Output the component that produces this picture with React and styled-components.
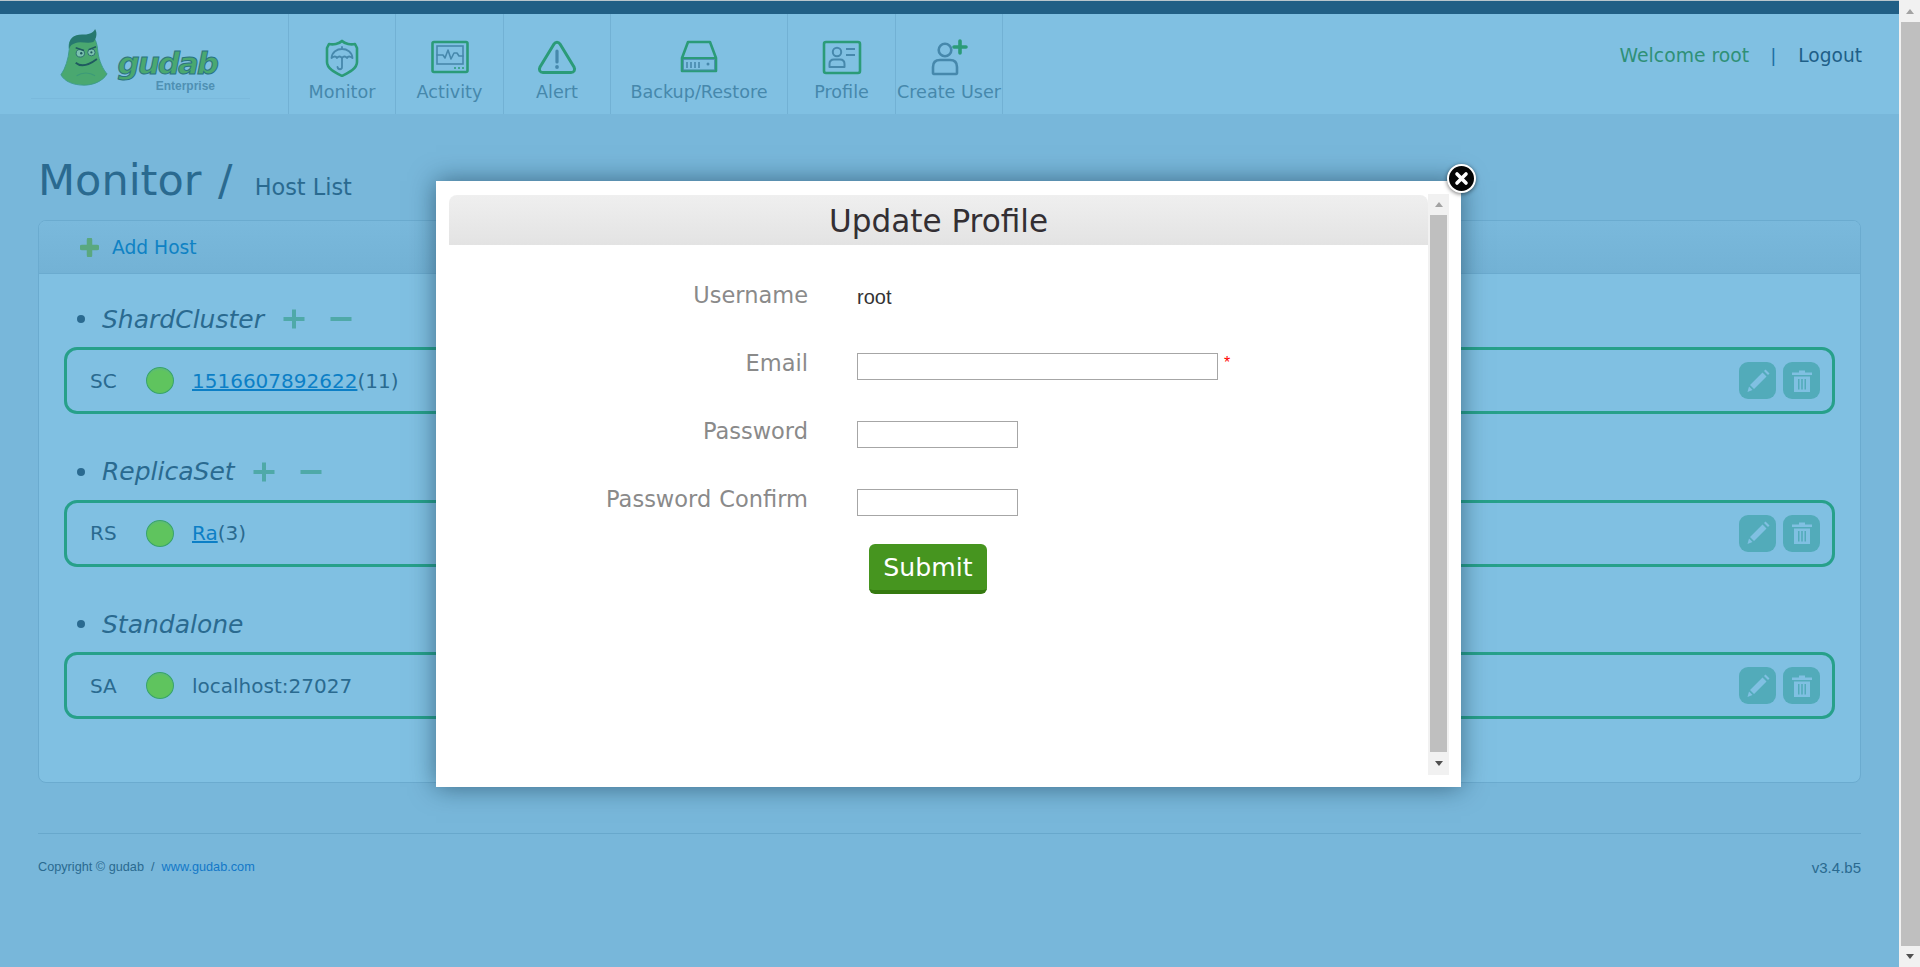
import React from 'react';
import styled, { createGlobalStyle } from 'styled-components';

const Global = createGlobalStyle`
  html, body { margin: 0; padding: 0; height: 100%; overflow: hidden; background: #78b7da; }
  * { box-sizing: border-box; }
  body { font-family: "DejaVu Sans", Verdana, sans-serif; }
`;

const Shell = styled.div`display: flex; width: 1920px; height: 967px; overflow: hidden; position: relative; background: #78b7da;`;
const Page = styled.div`width: 1899px; flex: none; display: flex; flex-direction: column;`;
const TopBar = styled.div`height: 14px; flex: none; background: #215f85; border-top: 1px solid #b9c6cc;`;
const Header = styled.header`height: 100px; flex: none; background: #80c0e2; display: flex; align-items: stretch;`;
const LogoBox = styled.div`width: 219px; height: 81px; margin: 4px 38px 0 31px; flex: none; border-bottom: 1px solid #7ab9dc; display: flex;`;
const LogoText = styled.div`
  display: flex; flex-direction: column; align-items: flex-end; margin: 29px 0 0 9px; width: 100px;
`;
const LogoWord = styled.span`
  font: italic 700 31px/32px "DejaVu Sans", sans-serif; color: #4aa870; -webkit-text-stroke: 1px #2a7480; letter-spacing: -2px; white-space: nowrap;
`;
const LogoSub = styled.span`font: 700 12px/14px "Liberation Sans", sans-serif; color: #4f90b3; margin-right: 2px;`;
const Mascot = styled.svg`width: 48px; height: 58px; margin: 11px 0 0 29px; flex: none;`;
const Nav = styled.nav`display: flex; border-left: 1px solid #72b1d4;`;
const NavItem = styled.div`
  width: ${p => p.$w}px; display: flex; flex-direction: column; align-items: center; border-right: 1px solid #72b1d4; padding-top: 25px;
`;
const NavIcon = styled.svg`width: 40px; height: 38px; flex: none;`;
const NavLabel = styled.span`font-size: 17.6px; line-height: 20px; margin-top: 5px; color: #4688ac; white-space: nowrap;`;
const UserBox = styled.div`margin-left: auto; margin-right: 37px; padding-top: 31px; line-height: 22px; display: flex; color: #2a6a90;`;
const Welcome = styled.span`color: #2f9077; font-size: 18.8px;`;
const Sep = styled.span`margin: 0 22px 0 21px; color: #1d6fa5; font-size: 18.4px;`;
const Logout = styled.span`color: #1e5f88; font-size: 18.6px;`;

const Main = styled.main`padding: 0 38px; flex: 1; display: flex; flex-direction: column;`;
const TitleRow = styled.div`height: 106px; padding-top: 41px; display: flex; align-items: baseline; color: #2a6a90; white-space: pre;`;
const Title = styled.h1`margin: 0; font-size: 43px; line-height: 50px; font-weight: 400; word-spacing: 3px;`;
const SubTitle = styled.span`font-size: 22.4px; margin-left: 22px;`;
const Panel = styled.section`height: 563px; background: #80c0e2; border: 1px solid #6babcf; border-radius: 8px; overflow: hidden;`;
const PanelHead = styled.div`height: 53px; background: linear-gradient(#7ab9dc, #73b2d5); border-bottom: 1px solid #6babcf; display: flex; align-items: center; padding: 1px 0 0 41px;`;
const AddIcon = styled.svg`width: 19px; height: 19px; margin-right: 13px;`;
const AddText = styled.span`font-size: 18.7px; color: #0f82c4;`;
const PanelBody = styled.div`padding: 27px 25px 0 25px;`;
const Group = styled.div`height: 152.5px;`;
const GroupHead = styled.div`height: 46px; padding-bottom: 10px; display: flex; align-items: center;`;
const Bullet = styled.span`width: 8px; height: 8px; border-radius: 50%; background: #2a6a90; margin: 0 17px 0 13px;`;
const GroupName = styled.em`font-size: 25px; color: #2a6a90;`;
const GroupBtn = styled.svg`width: 22px; height: 22px; margin-left: ${p => p.$ml}px;`;
const Row = styled.div`
  height: 67px; border: 3px solid #27a08a; border-radius: 13px; display: flex; align-items: center; padding: 0 12px 0 23px; font-size: 20px; color: #2a6a90;
`;
const Kind = styled.span`width: 56px;`;
const Dot = styled.span`
  width: 28px; height: 27px; border-radius: 50%; margin-right: 18px; border: 1px solid #37a46a;
  background: radial-gradient(circle at 50% 62%, #5fc45e 62%, #5cb87c 80%, #6aa9a0 100%);
`;
const HostLink = styled.a`color: #0c7fc6; text-decoration: underline;`;
const RowActions = styled.div`margin-left: auto; display: flex; gap: 7px;`;
const ActionBtn = styled.span`width: 37px; height: 37px; background: #52abba; border-radius: 9px; display: flex; align-items: center; justify-content: center;`;
const ActionIcon = styled.svg`width: 26px; height: 26px;`;
const Footer = styled.footer`margin-top: 50px; border-top: 1px solid #68a8cc; display: flex; justify-content: space-between; align-items: flex-start; padding-top: 24px;`;
const Copy = styled.span`font: 12.7px/18px "Liberation Sans", sans-serif; color: #2a6a90; white-space: pre;`;
const CopyLink = styled.span`color: #1377c8;`;
const Version = styled.span`font: 15px/20px "Liberation Sans", sans-serif; color: #2a6a90;`;

const Scrollbar = styled.div`width: 21px; flex: none; background: #f1f1f1; display: flex; flex-direction: column; align-items: flex-end;`;
const Arrow = styled.div`
  height: ${p => p.$h}px; width: 100%; display: flex; align-items: center; justify-content: center; flex: none;
  &::before { content: ""; border-left: 4.5px solid transparent; border-right: 4.5px solid transparent;
    ${p => p.$up ? `border-bottom: 5px solid ${p.$c};` : `border-top: 5px solid ${p.$c};`} }
`;
const Thumb = styled.div`flex: 1; width: ${p => p.$w}px; background: #bfbfbf; margin-right: ${p => p.$mr}px;`;

const Modal = styled.div`
  position: absolute; left: 436px; top: 181px; width: 1025px; height: 606px; background: #fff;
  box-shadow: 0 0 24px rgba(10, 40, 60, 0.55); padding: 13px 12px 12px 13px; display: flex;
`;
const Close = styled.div`
  position: absolute; right: -15px; top: -17px; width: 29px; height: 29px; border-radius: 50%; background: #050505; border: 2px solid #fff;
  box-shadow: 0 1px 4px rgba(0,0,0,.55); display: flex; align-items: center; justify-content: center;
`;
const CloseIcon = styled.svg`width: 15px; height: 15px;`;
const ModalContent = styled.div`flex: 1; min-width: 0; display: flex; flex-direction: column;`;
const ModalHead = styled.h2`
  margin: 1px 0 0; height: 50px; background: linear-gradient(#efefef, #e3e3e3); border-radius: 8px 8px 0 0; font-size: 31.1px; line-height: 52px; font-weight: 400; color: #332f33; text-align: center;
`;
const Form = styled.div`padding-top: 36px; display: flex; flex-direction: column;`;
const FormRow = styled.div`height: 68px; display: flex; align-items: flex-start;`;
const Label = styled.label`width: 359px; text-align: right; font-size: 22.5px; line-height: 28px; color: #8a8a8a; flex: none; white-space: nowrap; word-spacing: 1px;`;
const Value = styled.div`margin-left: 49px; display: flex; align-items: flex-start;`;
const Plain = styled.span`font: 20px/28px "Liberation Sans", sans-serif; color: #333; margin-top: 2px;`;
const Input = styled.input`width: ${p => p.$w}px; height: 27px; border: 1px solid #a6a6a6; background: #fff; padding: 0; margin-top: 4px; display: block;`;
const Required = styled.span`color: #f00; font: 16px/20px "Liberation Sans", sans-serif; margin: 4px 0 0 6px;`;
const Submit = styled.button`
  margin: -9px 0 0 420px; width: 118px; height: 50px; background: #46951f; border: 0; border-bottom: 4px solid #357a10; border-radius: 6px; color: #fff;
  font-family: "DejaVu Sans", sans-serif; font-size: 25.2px; padding: 0;
`;

const stroke = { fill: 'none', strokeLinecap: 'round', strokeLinejoin: 'round' };
const G = '#2b9b78', B = '#4688ac';

const Icons = {
  monitor: (
    <NavIcon viewBox="0 0 40 38">
      <path d="M20 2 C23 5 29 6 33 5 L35 9 V23 C35 30 26 34 20 37 C14 34 5 30 5 23 V9 L7 5 C11 6 17 5 20 2Z" stroke={G} strokeWidth="2.6" {...stroke} />
      <path d="M9.5 19 C10 13 15 10 20 10 C25 10 30 13 30.5 19 C28 17 26 17 25 19 C23.5 17 21.5 17 20 19 C18.5 17 16.5 17 15 19 C14 17 12 17 9.5 19Z M20 10V8" stroke={B} strokeWidth="1.8" {...stroke} />
      <path d="M20 19V28 C20 31 16 31 15.5 28" stroke={B} strokeWidth="1.8" {...stroke} />
    </NavIcon>
  ),
  activity: (
    <NavIcon viewBox="0 0 40 38">
      <rect x="2.5" y="3" width="35" height="30" rx="1.5" stroke={G} strokeWidth="2.6" fill="none" />
      <rect x="7" y="7" width="26" height="18" stroke={B} strokeWidth="1.6" fill="none" />
      <path d="M7 16H13L15 19L18 11L21 20L24 14H27L29 17H33" stroke={B} strokeWidth="1.6" {...stroke} />
      <path d="M24 29H26M28 29H30M32 29H34" stroke={G} strokeWidth="1.6" />
    </NavIcon>
  ),
  alert: (
    <NavIcon viewBox="0 0 40 38">
      <path d="M17 5 C18.5 2.5 21.5 2.5 23 5 L37 28 C38.5 31 37 33.5 34 33.5 H6 C3 33.5 1.5 31 3 28Z" stroke={G} strokeWidth="3" {...stroke} />
      <path d="M20 12V23" stroke={B} strokeWidth="3.2" strokeLinecap="round" />
      <circle cx="20" cy="28" r="1.9" fill={B} />
    </NavIcon>
  ),
  backup: (
    <NavIcon viewBox="0 0 40 38">
      <path d="M9 3H31L37 19V32H3V19Z" stroke={G} strokeWidth="2.6" {...stroke} />
      <path d="M3 19H37" stroke={G} strokeWidth="2.2" />
      <path d="M8 23V29M12 23V29M16 23V29M20 23V29" stroke={B} strokeWidth="1.6" />
      <rect x="4.5" y="20.5" width="31" height="10.5" stroke={B} strokeWidth="0.8" fill="none" />
      <circle cx="29" cy="25" r="1.5" fill={B} />
    </NavIcon>
  ),
  profile: (
    <NavIcon viewBox="0 0 40 38">
      <rect x="2" y="3" width="36" height="31" rx="2" stroke={G} strokeWidth="2.6" fill="none" />
      <circle cx="15" cy="13" r="4.2" stroke={B} strokeWidth="2" fill="none" />
      <path d="M7.5 28 V25 C7.5 21.5 10 20.5 12 20.5 H18 C20 20.5 22.5 21.5 22.5 25 V28Z" stroke={B} strokeWidth="2" {...stroke} />
      <path d="M24 10H33M24 16H33" stroke={B} strokeWidth="2.2" />
    </NavIcon>
  ),
  user: (
    <NavIcon viewBox="0 0 40 38">
      <circle cx="16" cy="11" r="6.3" stroke={B} strokeWidth="2.6" fill="none" />
      <path d="M4 34 V28 C4 23 7 21 11 21 H21 C25 21 28 23 28 28 V34 C28 35 27 35 26 35 H6 C5 35 4 35 4 34Z" stroke={B} strokeWidth="2.6" {...stroke} />
      <path d="M31 2V14M25 8H37" stroke={G} strokeWidth="3.6" strokeLinecap="round" />
    </NavIcon>
  ),
};

const navItems = [
  ['Monitor', 107, Icons.monitor],
  ['Activity', 108, Icons.activity],
  ['Alert', 107, Icons.alert],
  ['Backup/Restore', 177, Icons.backup],
  ['Profile', 108, Icons.profile],
  ['Create User', 107, Icons.user],
];

const PlusMinus = ({ kind, ml }) => (
  <GroupBtn viewBox="0 0 22 22" $ml={ml}>
    {kind === 'plus' && <path d="M11 1.5V20.5" stroke="#4fa9a8" strokeWidth="4" />}
    <path d="M0.5 11H21.5" stroke="#4fa9a8" strokeWidth="4" />
  </GroupBtn>
);

const RowItem = ({ kind, children }) => (
  <Row>
    <Kind>{kind}</Kind>
    <Dot />
    <span>{children}</span>
    <RowActions>
      <ActionBtn>
        <ActionIcon viewBox="0 0 26 26">
          <path d="M17.5 4.5L21.5 8.5L9 21L5 17Z M19 3L20.5 1.5L24.5 5.5L23 7Z" fill="#80c0e2" />
          <path d="M4 18.5L7.5 22L2.5 24Z" fill="#80c0e2" />
        </ActionIcon>
      </ActionBtn>
      <ActionBtn>
        <ActionIcon viewBox="0 0 26 26">
          <path d="M3 4.5H10V2.5H16V4.5H23V7H3Z" fill="#80c0e2" />
          <path fillRule="evenodd" d="M5 8.5H21V24H5Z M9 11V21.5H10.5V11Z M12.2 11V21.5H13.8V11Z M15.5 11V21.5H17V11Z" fill="#80c0e2" />
        </ActionIcon>
      </ActionBtn>
    </RowActions>
  </Row>
);

export default function App() {
  return (
    <Shell>
      <Global />
      <Page>
        <TopBar />
        <Header>
          <LogoBox>
            <Mascot viewBox="0 0 52 62" preserveAspectRatio="none">
              <path d="M10 22 C9 14 12 8 20 7 H32 C38 8 40 14 41 24 C42 34 47 44 51 48 C46 56 36 60 26 60 C14 60 5 56 1 49 C6 42 9 32 10 22Z" fill="#4aa870" stroke="#3c9a8a" strokeWidth="1" />
              <path d="M10 21 C9 11 14 6 24 6 C30 6 36 5 38 0 C41 5 39 11 36 14 C30 16 22 13 17 15 C13 16 11 18 10 21Z" fill="#26786f" />
              <ellipse cx="22" cy="26" rx="4.5" ry="4" fill="#7cc2b0" stroke="#2a6a70" strokeWidth="1" />
              <ellipse cx="34" cy="25" rx="4" ry="3.7" fill="#7cc2b0" stroke="#2a6a70" strokeWidth="1" />
              <circle cx="23" cy="26" r="1.3" fill="#1f5a60" />
              <circle cx="34" cy="25" r="1.2" fill="#1f5a60" />
              <path d="M17 20L26 23M39 19L31 22" stroke="#1f5a60" strokeWidth="1.6" />
              <path d="M17 36 C24 42 32 38 40 32" stroke="#1f5a60" strokeWidth="2" fill="none" />
              <path d="M18 50 C24 46 32 46 38 50" stroke="#3c9a78" strokeWidth="1.2" fill="none" />
            </Mascot>
            <LogoText>
              <LogoWord>gudab</LogoWord>
              <LogoSub>Enterprise</LogoSub>
            </LogoText>
          </LogoBox>
          <Nav>
            {navItems.map(([label, w, icon]) => (
              <NavItem key={label} $w={w}>
                {icon}
                <NavLabel>{label}</NavLabel>
              </NavItem>
            ))}
          </Nav>
          <UserBox>
            <Welcome>Welcome root</Welcome>
            <Sep>|</Sep>
            <Logout>Logout</Logout>
          </UserBox>
        </Header>
        <Main>
          <TitleRow>
            <Title>Monitor /</Title>
            <SubTitle>Host List</SubTitle>
          </TitleRow>
          <Panel>
            <PanelHead>
              <AddIcon viewBox="0 0 19 19">
                <path d="M9.5 2V17M2 9.5H17" stroke="#5aa87f" strokeWidth="5.5" strokeLinecap="round" />
              </AddIcon>
              <AddText>Add Host</AddText>
            </PanelHead>
            <PanelBody>
              <Group>
                <GroupHead>
                  <Bullet /><GroupName>ShardCluster</GroupName>
                  <PlusMinus kind="plus" ml={19} /><PlusMinus kind="minus" ml={25} />
                </GroupHead>
                <RowItem kind="SC"><HostLink>1516607892622</HostLink>(11)</RowItem>
              </Group>
              <Group>
                <GroupHead>
                  <Bullet /><GroupName>ReplicaSet</GroupName>
                  <PlusMinus kind="plus" ml={18} /><PlusMinus kind="minus" ml={25} />
                </GroupHead>
                <RowItem kind="RS"><HostLink>Ra</HostLink>(3)</RowItem>
              </Group>
              <Group>
                <GroupHead>
                  <Bullet /><GroupName>Standalone</GroupName>
                </GroupHead>
                <RowItem kind="SA">localhost:27027</RowItem>
              </Group>
            </PanelBody>
          </Panel>
          <Footer>
            <Copy>Copyright © gudab  /  <CopyLink>www.gudab.com</CopyLink></Copy>
            <Version>v3.4.b5</Version>
          </Footer>
        </Main>
      </Page>
      <Scrollbar>
        <Arrow $up $h={22} $c="#a3a3a3" />
        <Thumb $w={19} $mr={0} />
        <Arrow $h={21} $c="#505050" />
      </Scrollbar>
      <Modal>
        <Close>
          <CloseIcon viewBox="0 0 15 15">
            <path d="M3 3L12 12M12 3L3 12" stroke="#fff" strokeWidth="3.6" strokeLinecap="round" />
          </CloseIcon>
        </Close>
        <ModalContent>
          <ModalHead>Update Profile</ModalHead>
          <Form>
            <FormRow>
              <Label>Username</Label>
              <Value><Plain>root</Plain></Value>
            </FormRow>
            <FormRow>
              <Label>Email</Label>
              <Value><Input $w={361} /><Required>*</Required></Value>
            </FormRow>
            <FormRow>
              <Label>Password</Label>
              <Value><Input type="password" $w={161} /></Value>
            </FormRow>
            <FormRow>
              <Label>Password Confirm</Label>
              <Value><Input type="password" $w={161} /></Value>
            </FormRow>
            <Submit>Submit</Submit>
          </Form>
        </ModalContent>
        <Scrollbar>
          <Arrow $up $h={21} $c="#a3a3a3" />
          <Thumb $w={17} $mr={2} />
          <Arrow $h={23} $c="#505050" />
        </Scrollbar>
      </Modal>
    </Shell>
  );
}
